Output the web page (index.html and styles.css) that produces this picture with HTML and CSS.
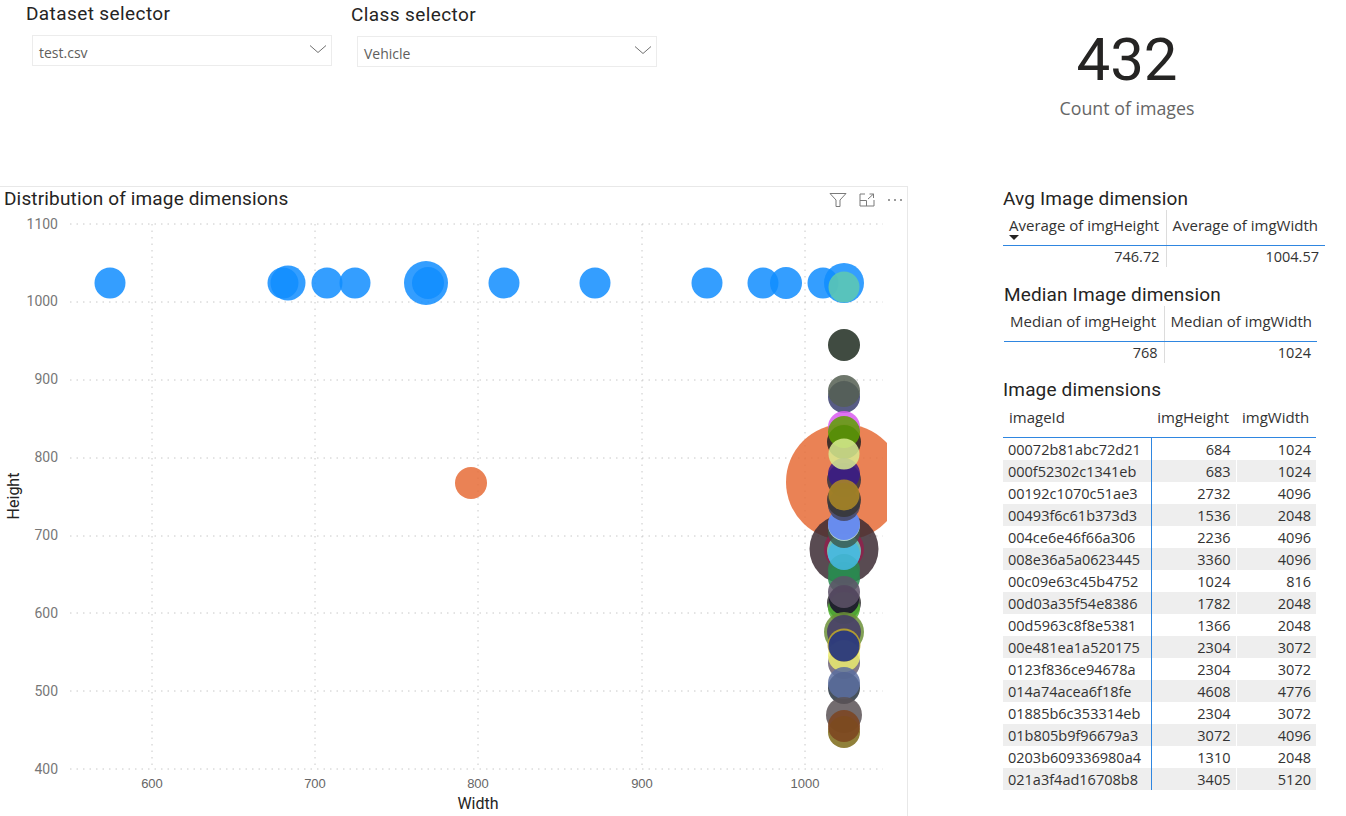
FILE: index.html
```html
<!DOCTYPE html>
<html lang="en">
<head>
  <meta charset="UTF-8" />
  <title>Image dimensions report</title>
  <link rel="stylesheet" href="styles.css">
</head>
<body>
  <div class="page">
    <div class="top">
      <div class="slicer">
        <div class="slicer-title">Dataset selector</div>
        <div class="slicer-box">
          <span>test.csv</span>
          <svg class="chevron" width="18" height="10" viewBox="0 0 18 10"><path d="M1 1.5 L9 8.5 L17 1.5" /></svg>
        </div>
      </div>
      <div class="slicer slicer-low">
        <div class="slicer-title">Class selector</div>
        <div class="slicer-box">
          <span>Vehicle</span>
          <svg class="chevron" width="18" height="10" viewBox="0 0 18 10"><path d="M1 1.5 L9 8.5 L17 1.5" /></svg>
        </div>
      </div>
      <div class="card">
        <div class="card-value">432</div>
        <div class="card-label">Count of images</div>
      </div>
    </div>

    <div class="main">
      <div class="chart-panel">
        <div class="chart-head">
          <div class="chart-title">Distribution of image dimensions</div>
          <div class="chart-icons">
            <svg width="18" height="16" viewBox="0 0 18 16"><path d="M1 1.5 H17 L11 8 V14.5 H7 V8 Z" /></svg>
            <svg width="16" height="14" viewBox="0 0 16 14"><path d="M6 1 H1 V13 H15 V7 M1 7.5 H7.5 V13 M9 6 L14.5 1 M10.5 1 H14.5 V5" /></svg>
            <svg width="16" height="4" viewBox="0 0 16 4"><circle class="dot" cx="2" cy="2" r="1" /><circle class="dot" cx="8" cy="2" r="1" /><circle class="dot" cx="14" cy="2" r="1" /></svg>
          </div>
        </div>
        <svg class="plot" width="907" height="604" viewBox="0 212 907 604">
          <defs><clipPath id="plot-clip"><rect x="60" y="212" width="827" height="570" /></clipPath></defs>
          <g class="grid">
            <line x1="70" y1="224" x2="883" y2="224" />
            <line x1="70" y1="302" x2="883" y2="302" />
            <line x1="70" y1="380" x2="883" y2="380" />
            <line x1="70" y1="458" x2="883" y2="458" />
            <line x1="70" y1="536" x2="883" y2="536" />
            <line x1="70" y1="613" x2="883" y2="613" />
            <line x1="70" y1="691" x2="883" y2="691" />
            <line x1="70" y1="769" x2="883" y2="769" />
            <line x1="152" y1="224" x2="152" y2="769" />
            <line x1="315" y1="224" x2="315" y2="769" />
            <line x1="478" y1="224" x2="478" y2="769" />
            <line x1="642" y1="224" x2="642" y2="769" />
            <line x1="805" y1="224" x2="805" y2="769" />
          </g>
          <g class="ticks-y">
            <text x="58" y="229">1100</text>
            <text x="58" y="306">1000</text>
            <text x="58" y="384">900</text>
            <text x="58" y="462">800</text>
            <text x="58" y="540">700</text>
            <text x="58" y="618">600</text>
            <text x="58" y="696">500</text>
            <text x="58" y="774">400</text>
          </g>
          <g class="ticks-x">
            <text x="152" y="788">600</text>
            <text x="315" y="788">700</text>
            <text x="478" y="788">800</text>
            <text x="642" y="788">900</text>
            <text x="805" y="788">1000</text>
          </g>
          <text class="axis-title" x="478" y="809">Width</text>
          <text class="axis-title" transform="translate(19 496) rotate(-90)">Height</text>
          <g class="bubbles" clip-path="url(#plot-clip)">
            <circle cx="110" cy="283" r="15.5" fill="#118dff" />
            <circle cx="283" cy="283" r="15.5" fill="#118dff" />
            <circle cx="288" cy="283" r="17.5" fill="#118dff" />
            <circle cx="327" cy="283" r="15.5" fill="#118dff" />
            <circle cx="355" cy="283" r="15.5" fill="#118dff" />
            <circle cx="426" cy="283" r="22" fill="#118dff" />
            <circle cx="428" cy="283" r="16" fill="#118dff" />
            <circle cx="504" cy="283" r="15.5" fill="#118dff" />
            <circle cx="595" cy="283" r="15.5" fill="#118dff" />
            <circle cx="707" cy="283" r="15.5" fill="#118dff" />
            <circle cx="763" cy="283" r="15.5" fill="#118dff" />
            <circle cx="786" cy="283" r="16" fill="#118dff" />
            <circle cx="823" cy="283" r="15.5" fill="#118dff" />
            <circle cx="844" cy="283" r="20" fill="#118dff" />
            <circle cx="844" cy="287" r="15.5" fill="#5fc9b0" />
            <circle cx="471" cy="483" r="16" fill="#e66c37" />
            <circle cx="844" cy="482" r="58" fill="#e66c37" />
            <circle cx="844" cy="549" r="34.5" fill="#3c2c34" />
            <circle cx="844" cy="549" r="20" fill="#90204c" />
            <circle cx="844" cy="345" r="16" fill="#1f2b20" />
            <circle cx="844" cy="397" r="16" fill="#3b3f70" />
            <circle cx="844" cy="391" r="16" fill="#555f52" />
            <circle cx="844" cy="427" r="16" fill="#d95bf0" />
            <circle cx="844" cy="442" r="17" fill="#222222" />
            <circle cx="844" cy="432" r="16" fill="#5da000" />
            <circle cx="844" cy="480" r="17" fill="#333340" />
            <circle cx="844" cy="474" r="16" fill="#3a1a8a" />
            <circle cx="844" cy="454" r="15.5" fill="#d8ec90" />
            <circle cx="844" cy="551" r="17" fill="#70d8c0" />
            <circle cx="844" cy="578" r="16" fill="#2a8a50" />
            <circle cx="844" cy="570" r="16" fill="#2a8a50" />
            <circle cx="844" cy="554" r="16" fill="#44b8e4" />
            <circle cx="844" cy="532" r="16" fill="#3c5c50" />
            <circle cx="844" cy="525" r="16" fill="#c8e8e0" />
            <circle cx="844" cy="524" r="16" fill="#5a80f4" />
            <circle cx="844" cy="505" r="16" fill="#454560" />
            <circle cx="844" cy="500" r="17" fill="#363636" />
            <circle cx="844" cy="495" r="15.5" fill="#ad8a24" />
            <circle cx="844" cy="603" r="17" fill="#333333" />
            <circle cx="844" cy="608" r="16" fill="#50b430" />
            <circle cx="844" cy="600" r="15" fill="#180a2c" />
            <circle cx="844" cy="592" r="16" fill="#5e5268" />
            <circle cx="844" cy="632" r="20" fill="#6c9038" />
            <circle cx="844" cy="632" r="17" fill="#443868" />
            <circle cx="844" cy="663" r="16" fill="#6c6074" />
            <circle cx="844" cy="656" r="16" fill="#ecec70" />
            <circle cx="844" cy="645" r="16.5" fill="#c4ac28" />
            <circle cx="844" cy="646" r="15.5" fill="#182c88" />
            <circle cx="844" cy="688" r="16" fill="#283440" />
            <circle cx="844" cy="683" r="16" fill="#5c6ea0" />
            <circle cx="844" cy="715" r="18" fill="#5a5256" />
            <circle cx="844" cy="732" r="16" fill="#7c6a18" />
            <circle cx="844" cy="726" r="16" fill="#7c4420" />
          </g>
        </svg>
      </div>

      <div class="side">
        <div class="side-title">Avg Image dimension</div>
        <table class="summary summary-avg">
          <tr>
            <th>Average of imgHeight<span class="sort-mark"></span></th>
            <th>Average of imgWidth</th>
          </tr>
          <tr><td>746.72</td><td>1004.57</td></tr>
        </table>

        <div class="side-title title-median">Median Image dimension</div>
        <table class="summary summary-median">
          <tr>
            <th>Median of imgHeight</th>
            <th>Median of imgWidth</th>
          </tr>
          <tr><td>768</td><td>1024</td></tr>
        </table>

        <div class="side-title title-dims">Image dimensions</div>
        <table class="dims">
          <thead>
            <tr><th>imageId</th><th class="num">imgHeight</th><th class="num">imgWidth</th></tr>
          </thead>
          <tbody>
            <tr><td>00072b81abc72d21</td><td>684</td><td>1024</td></tr>
            <tr><td>000f52302c1341eb</td><td>683</td><td>1024</td></tr>
            <tr><td>00192c1070c51ae3</td><td>2732</td><td>4096</td></tr>
            <tr><td>00493f6c61b373d3</td><td>1536</td><td>2048</td></tr>
            <tr><td>004ce6e46f66a306</td><td>2236</td><td>4096</td></tr>
            <tr><td>008e36a5a0623445</td><td>3360</td><td>4096</td></tr>
            <tr><td>00c09e63c45b4752</td><td>1024</td><td>816</td></tr>
            <tr><td>00d03a35f54e8386</td><td>1782</td><td>2048</td></tr>
            <tr><td>00d5963c8f8e5381</td><td>1366</td><td>2048</td></tr>
            <tr><td>00e481ea1a520175</td><td>2304</td><td>3072</td></tr>
            <tr><td>0123f836ce94678a</td><td>2304</td><td>3072</td></tr>
            <tr><td>014a74acea6f18fe</td><td>4608</td><td>4776</td></tr>
            <tr><td>01885b6c353314eb</td><td>2304</td><td>3072</td></tr>
            <tr><td>01b805b9f96679a3</td><td>3072</td><td>4096</td></tr>
            <tr><td>0203b609336980a4</td><td>1310</td><td>2048</td></tr>
            <tr><td>021a3f4ad16708b8</td><td>3405</td><td>5120</td></tr>
          </tbody>
        </table>
      </div>
    </div>
  </div>
</body>
</html>
```

FILE: styles.css
```css
* { box-sizing: border-box; }
html, body {
  margin: 0; padding: 0;
  background: #fff;
  font-family: 'Open Sans', sans-serif;
  color: #252423;
}
.page {
  width: 1346px; height: 816px;
  overflow: hidden;
}

/* top row */
.top {
  display: flex; height: 186px;
  padding-left: 26px;
}
.slicer { width: 325px; padding-top: 3px; }
.slicer-low { padding-top: 4px; }
.slicer-title {
  font-family: 'Roboto', sans-serif;
  font-size: 19px; line-height: 21px;
  letter-spacing: 0.4px;
  height: 32px;
  color: #252423;
}
.slicer-box {
  display: flex; justify-content: space-between;
  align-items: center;
  width: 300px; height: 31px;
  margin-left: 6px;
  padding: 0 4px 0 6px;
  border: 1.5px solid #ececec;
  font-size: 14px; color: #605e5c;
}
.slicer-box span { margin-top: 3px; }
.chevron { fill: none; stroke: #707070; stroke-width: 1; margin-top: -4px; }
.card {
  margin-left: auto; margin-right: 69px;
  width: 300px; padding-top: 25px;
  text-align: center;
}
.card-value {
  font-family: 'Roboto', sans-serif;
  font-size: 60px; line-height: 70px;
  color: #252423;
}
.card-label { font-size: 17.8px; line-height: 26px; color: #666; }

/* chart */
.main { display: flex; height: 630px; }
.chart-panel {
  width: 908px; height: 630px;
  border-top: 1px solid #e8e8e8;
  border-right: 1px solid #e8e8e8;
}
.chart-head {
  display: flex; justify-content: space-between;
  align-items: center;
  height: 25px; padding: 0 4px;
}
.chart-title {
  font-family: 'Roboto', sans-serif;
  font-size: 19px; letter-spacing: 0.15px;
  margin-top: -2px;
  color: #252423;
}
.chart-icons { display: flex; align-items: center; gap: 12px; }
.chart-icons svg { fill: none; stroke: #7a7a7a; stroke-width: 1; }
.chart-icons .dot { fill: #7a7a7a; stroke: none; }
.plot { display: block; }
.grid line { stroke: #c8c8c8; stroke-width: 1; stroke-dasharray: 1.5 5; }
.ticks-y text {
  font-family: 'Roboto', sans-serif;
  font-size: 14px; fill: #777;
  text-anchor: end;
}
.ticks-x text {
  font-family: 'Liberation Sans', sans-serif;
  font-size: 13px; fill: #666;
  text-anchor: middle;
}
.axis-title {
  font-family: 'Roboto', sans-serif;
  font-size: 16px; fill: #252423;
  text-anchor: middle;
}
.bubbles circle { opacity: 0.85; }

/* right column */
.side { margin-left: 95px; width: 330px; padding-top: 2px; }
.side-title {
  font-family: 'Roboto', sans-serif;
  font-size: 19px; letter-spacing: 0.15px;
  line-height: 22px;
  color: #252423;
}
.title-median { margin: 17px 0 0 1px; }
.title-dims { margin-top: 16px; }

table { border-collapse: collapse; table-layout: fixed; font-size: 14.5px; }
.summary th, .summary td {
  font-weight: 400; color: #333;
  padding: 0 6px;
}
.summary th {
  text-align: left; font-size: 15px;
  height: 35px; vertical-align: top;
  padding-top: 5px;
  white-space: nowrap;
  border-bottom: 1px solid #2f86e0;
  position: relative;
}
.summary td { text-align: right; height: 22px; vertical-align: bottom; padding-bottom: 0; line-height: 20px; }
.summary th:first-child, .summary td:first-child { border-right: 1px solid #dcdcdc; }
.summary-avg { width: 322px; }
.summary-avg th:first-child { width: 163px; }
.summary-median { width: 313px; margin-left: 1px; }
.summary-median th { height: 35px; padding-top: 5px; }
.summary-median th:first-child { width: 160px; }
.sort-mark {
  position: absolute; left: 6px; top: 25px;
  border-left: 5px solid transparent;
  border-right: 5px solid transparent;
  border-top: 5px solid #252423;
}

.dims { width: 313px; }
.dims th {
  font-weight: 400; text-align: left;
  font-size: 15px;
  height: 36px; padding: 6px 7px 10px 6px;
  color: #333;
  border-bottom: 1px solid #2f86e0;
}
.dims th:nth-child(1) { width: 148px; }
.dims th:nth-child(2) { width: 85px; }
.dims th.num { text-align: right; }
.dims td {
  height: 22px; padding: 2px 5px 0;
  text-align: right; color: #333;
  line-height: 20px; white-space: nowrap;
}
.dims td:first-child { text-align: left; border-right: 1px solid #2f86e0; }
.dims td:nth-child(2) { border-right: 1px solid #fff; }
.dims tbody tr:nth-child(even) td { background: #eeeeee; }
```
